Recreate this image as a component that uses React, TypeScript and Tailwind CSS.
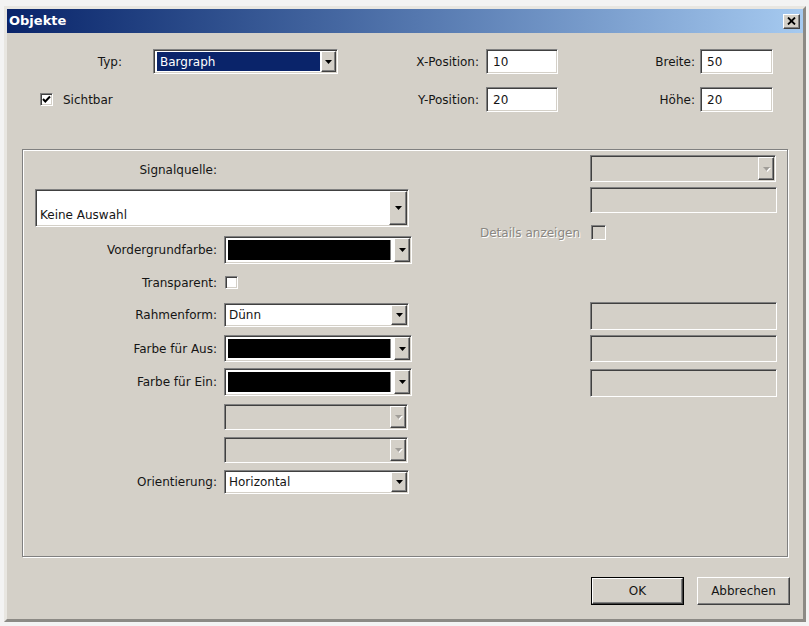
import type { ReactNode } from 'react';

// classic 3D edges
const sunken =
  'border border-t-[#808080] border-l-[#808080] border-b-white border-r-white shadow-[inset_1px_1px_0_#404040,inset_-1px_-1px_0_#d4d0c8]';
const raised =
  'border border-t-white border-l-white border-b-[#404040] border-r-[#404040] shadow-[inset_-1px_-1px_0_#808080]';
const disabledText = 'text-[#8a8782] [text-shadow:1px_1px_0_#ffffff]';

function Arrow({ disabled }: { disabled?: boolean }) {
  return (
    <svg width="7" height="4" viewBox="0 0 7 4" className={disabled ? 'drop-shadow-[1px_1px_0_#fff]' : ''}>
      <polygon points="0,0 7,0 3.5,4" fill={disabled ? '#a09d98' : '#000'} />
    </svg>
  );
}

function DropButton({ disabled, className = 'w-[16px]' }: { disabled?: boolean; className?: string }) {
  return (
    <div className={`${raised} ${className} shrink-0 bg-[#d4d0c8] flex items-center justify-center`}>
      <Arrow disabled={disabled} />
    </div>
  );
}

function Combo({
  className,
  children,
  disabled,
  align = 'items-center',
  btn,
}: {
  className: string;
  children?: ReactNode;
  disabled?: boolean;
  align?: string;
  btn?: string;
}) {
  return (
    <div className={`${sunken} ${className} flex ${disabled ? 'bg-[#d4d0c8]' : 'bg-white'} p-px`}>
      <div className={`flex-1 flex ${align} min-w-0 pl-[3px]`}>{children}</div>
      <DropButton disabled={disabled} className={btn} />
    </div>
  );
}

function ColorCombo({ className }: { className: string }) {
  return (
    <div className={`${sunken} ${className} flex bg-white p-px`}>
      <div className="flex-1 m-[2px] mr-[3px] bg-black border-r border-[#808080]" />
      <DropButton />
    </div>
  );
}

function TextBox({ className, value, disabled }: { className: string; value?: string; disabled?: boolean }) {
  return (
    <div className={`${sunken} ${className} flex items-center pl-[6px] ${disabled ? 'bg-[#d4d0c8]' : 'bg-white'}`}>
      {value}
    </div>
  );
}

function Check({ checked, disabled, className = '' }: { checked?: boolean; disabled?: boolean; className?: string }) {
  return (
    <div
      className={`${sunken} ${className} w-[13px] h-[13px] shrink-0 flex items-center justify-center ${
        disabled ? 'bg-[#d4d0c8]' : 'bg-white'
      }`}
    >
      {checked && (
        <svg width="9" height="9" viewBox="0 0 9 9">
          <polyline points="1,4 3.3,6.5 8,1.5" fill="none" stroke="#000" strokeWidth="2" />
        </svg>
      )}
    </div>
  );
}

function Label({ children, className = 'w-[183px]' }: { children: ReactNode; className?: string }) {
  return <div className={`${className} shrink-0 text-right pr-[1px]`}>{children}</div>;
}

// one label + control line inside the signal group
function Row({ label, className, children }: { label?: string; className: string; children: ReactNode }) {
  return (
    <div className={`flex items-center ${className}`}>
      <Label>{label}</Label>
      <div className="ml-[6px]">{children}</div>
    </div>
  );
}

export default function App() {
  return (
    <div className="w-[809px] h-[626px] bg-[#f3f3f3] pt-[6px] pl-[4px] font-['DejaVu_Sans',sans-serif] text-[12px] leading-[14px] text-[#151515] overflow-hidden">
      <div className="w-[802px] h-[616px] bg-[#d4d0c8] border-[3px] border-t-[#e8e6e1] border-l-[#e8e6e1] border-b-[#8c8a85] border-r-[#8c8a85] flex flex-col">
        {/* title bar */}
        <div className="h-[24px] shrink-0 bg-linear-to-r from-[#0a246a] to-[#a6caf0] flex items-center justify-between pl-[2px]">
          <span className="text-white font-bold text-[13px]">Objekte</span>
          <button className={`${raised} w-[17px] h-[15px] mr-[3px] bg-[#d4d0c8] flex items-center justify-center`}>
            <svg width="9" height="8" viewBox="0 0 9 8">
              <path d="M1 0.5 L8 7.5 M8 0.5 L1 7.5" stroke="#000" strokeWidth="1.8" />
            </svg>
          </button>
        </div>

        {/* object header fields */}
        <div className="flex items-center h-[25px] mt-[16px]">
          <div className="w-[146px] shrink-0 flex">
            <Label className="w-[116px]">Typ:</Label>
          </div>
          <Combo className="w-[185px] h-[25px]" btn="w-[15px]">
            <div className="bg-[#0a246a] text-white h-[19px] w-full flex items-center pl-[3px] -ml-[1px]">Bargraph</div>
          </Combo>
          <Label className="w-[142px]">X-Position:</Label>
          <TextBox className="w-[72px] h-[25px] ml-[6px]" value="10" />
          <Label className="w-[138px]">Breite:</Label>
          <TextBox className="w-[73px] h-[25px] ml-[4px]" value="50" />
        </div>
        <div className="flex items-center h-[25px] mt-[13px]">
          <div className="w-[331px] shrink-0 flex items-center pl-[33px]">
            <Check checked />
            <span className="ml-[10px]">Sichtbar</span>
          </div>
          <Label className="w-[142px]">Y-Position:</Label>
          <TextBox className="w-[72px] h-[25px] ml-[6px]" value="20" />
          <Label className="w-[138px]">Höhe:</Label>
          <TextBox className="w-[73px] h-[25px] ml-[4px]" value="20" />
        </div>

        {/* signal group */}
        <div className="mt-[37px] ml-[15px] w-[766px] h-[408px] shrink-0 border border-[#808080] shadow-[inset_1px_1px_0_#fff,1px_1px_0_#fff] flex">
          <div className="w-[377px] ml-[12px] flex flex-col">
            <div className="flex mt-[13px] h-[14px]">
              <Label>Signalquelle:</Label>
            </div>
            <Combo className="w-[374px] h-[38px] mt-[12px]" align="items-end pb-[3px]" btn="w-[18px]">
              Keine Auswahl
            </Combo>
            <Row label="Vordergrundfarbe:" className="mt-[9px] h-[28px]">
              <ColorCombo className="w-[188px] h-[28px]" />
            </Row>
            <Row label="Transparent:" className="mt-[12px] h-[13px]">
              <Check className="ml-[1px]" />
            </Row>
            <Row label="Rahmenform:" className="mt-[14px] h-[24px]">
              <Combo className="w-[185px] h-[24px]">Dünn</Combo>
            </Row>
            <Row label="Farbe für Aus:" className="mt-[8px] h-[27px]">
              <ColorCombo className="w-[188px] h-[27px]" />
            </Row>
            <Row label="Farbe für Ein:" className="mt-[6px] h-[28px]">
              <ColorCombo className="w-[188px] h-[28px]" />
            </Row>
            <Row className="mt-[8px] h-[26px]">
              <Combo className="w-[184px] h-[26px]" disabled />
            </Row>
            <Row className="mt-[7px] h-[26px]">
              <Combo className="w-[184px] h-[26px]" disabled />
            </Row>
            <Row label="Orientierung:" className="mt-[7px] h-[24px]">
              <Combo className="w-[185px] h-[24px]">Horizontal</Combo>
            </Row>
          </div>

          <div className="w-[297px] ml-[68px] flex flex-col">
            <Combo className="w-[186px] h-[27px] ml-[110px] mt-[5px]" disabled />
            <TextBox className="w-[187px] h-[26px] ml-[110px] mt-[5px]" disabled />
            <div className="flex items-center mt-[12px] h-[15px]">
              <div className={`w-[100px] text-right ${disabledText}`}>Details anzeigen</div>
              <Check className="ml-[11px] w-[15px] h-[15px]" disabled />
            </div>
            <TextBox className="w-[187px] h-[28px] ml-[110px] mt-[62px]" disabled />
            <TextBox className="w-[187px] h-[27px] ml-[110px] mt-[5px]" disabled />
            <TextBox className="w-[187px] h-[28px] ml-[110px] mt-[7px]" disabled />
          </div>
        </div>

        {/* dialog buttons */}
        <div className="flex justify-end gap-[13px] mt-[20px] pr-[13px]">
          <button className="w-[93px] h-[28px] border border-black bg-[#d4d0c8] p-0">
            <div className={`${raised} w-full h-full flex items-center justify-center`}>OK</div>
          </button>
          <button className={`${raised} w-[93px] h-[28px] bg-[#d4d0c8] flex items-center justify-center`}>
            Abbrechen
          </button>
        </div>
      </div>
    </div>
  );
}
